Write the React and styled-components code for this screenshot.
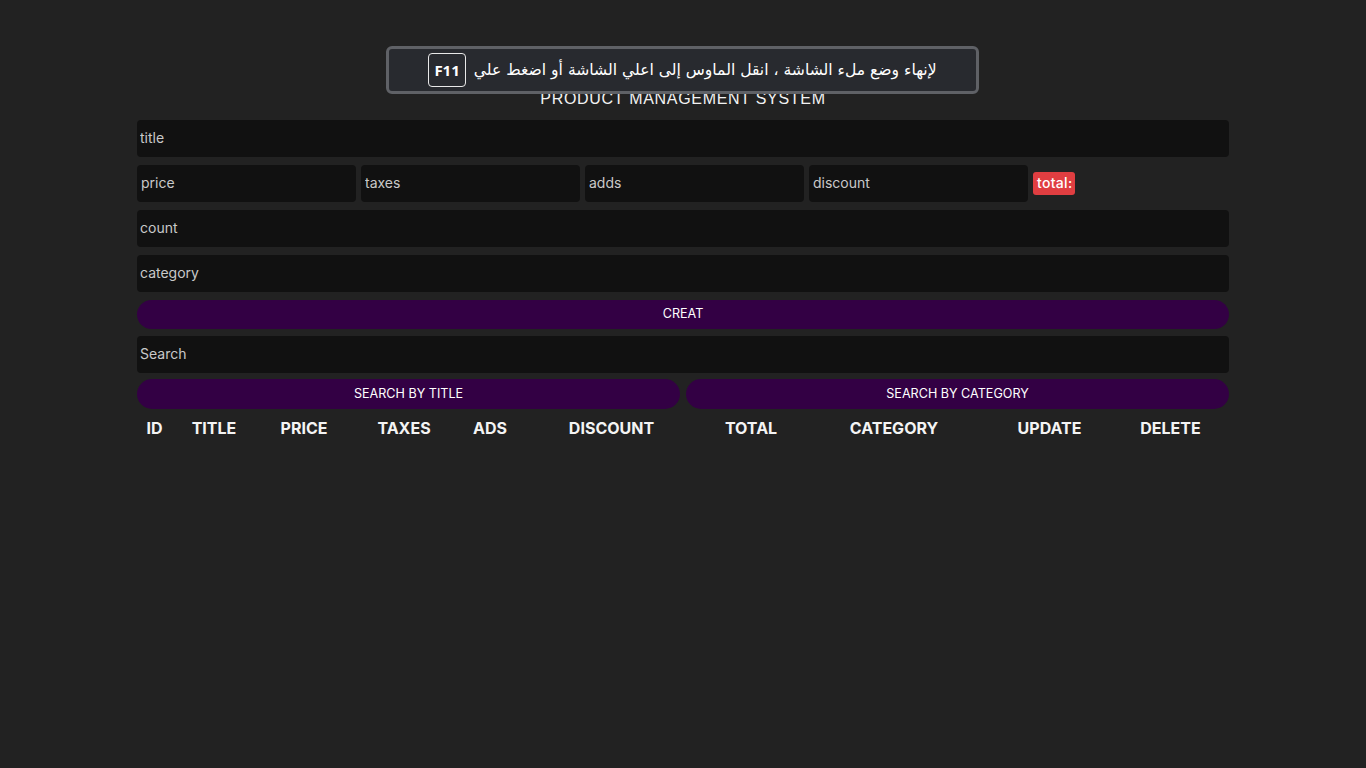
import React from "react";
import styled, { createGlobalStyle } from "styled-components";

const Global = createGlobalStyle`
  html, body { margin: 0; padding: 0; background: #222222; }
  body { font-family: Inter, "Noto Sans", sans-serif; color: #fff; }
  * { box-sizing: border-box; }
`;

const Page = styled.div`
  min-height: 768px;
  background: #222222;
  position: relative;
`;

const Container = styled.div`
  width: 1092px;
  margin: 0 auto;
  padding-top: 90px;
  display: flex;
  flex-direction: column;
`;

const Heading = styled.h2`
  margin: 0 0 12px;
  text-align: center;
  font-family: "Liberation Sans", Arial, sans-serif;
  font-size: 16px;
  font-weight: 400;
  letter-spacing: 0.7px;
  line-height: 18px;
  color: #f2f2f2;
`;

const Field = styled.input`
  width: 100%;
  height: 37px;
  border: none;
  outline: none;
  border-radius: 4px;
  background: #111111;
  padding: 0 3px 2px;
  margin-bottom: ${(p) => p.$mb ?? 8}px;
  font-family: Inter, sans-serif;
  font-size: 14px;
  color: #ddd;
  &::placeholder { color: #c9c9c9; }
`;

const PriceRow = styled.div`
  display: flex;
  align-items: center;
  gap: 5px;
  margin-bottom: 8px;
`;

const SmallField = styled(Field)`
  width: 219px;
  margin-bottom: 0;
  padding: 0 4px 2px;
`;

const Total = styled.small`
  background: #e03e41;
  color: #fff;
  border-radius: 3px;
  padding: 0 3px 0 4px;
  height: 23px;
  line-height: 22px;
  font-family: Inter, sans-serif;
  font-size: 14px;
  font-weight: 500;
  letter-spacing: 0.3px;
`;

const Button = styled.button`
  width: 100%;
  height: ${(p) => p.$h || 29}px;
  border: none;
  border-radius: 20px;
  background: #330044;
  color: #fff;
  font-family: Inter, sans-serif;
  font-size: 12.6px;
  cursor: pointer;
  padding: 0 0 2px;
  margin-bottom: ${(p) => p.$mb ?? 0}px;
`;

const SearchRow = styled.div`
  display: flex;
  gap: 6px;
  margin-top: -1px;
`;

const Header = styled.div`
  display: grid;
  grid-template-columns: 35px 84px 96px 104px 68px 175px 104px 182px 129px 113px;
  margin-top: 8px;
`;

const Th = styled.div`
  text-align: center;
  font-family: Inter, sans-serif;
  font-weight: 700;
  font-size: 16px;
  line-height: 22px;
  color: #f4f4f4;
`;

const Overlay = styled.div`
  position: absolute;
  top: 46px;
  left: 386px;
  width: 593px;
  height: 48px;
  background: #282a2f;
  border: 3px solid #5f6166;
  border-radius: 6px;
  display: flex;
  align-items: center;
  justify-content: center;
  gap: 8px;
  direction: rtl;
`;

const OverlayText = styled.span`
  font-family: "DejaVu Sans", "Noto Sans", sans-serif;
  font-size: 15.6px;
  color: #fff;
`;

const Key = styled.span`
  direction: ltr;
  border: 1px solid #e8e8e8;
  border-radius: 4px;
  padding: 0 5px;
  height: 34px;
  line-height: 32px;
  font-family: "Open Sans", sans-serif;
  font-weight: 700;
  font-size: 15px;
  color: #fff;
`;

const columns = ["ID", "TITLE", "PRICE", "TAXES", "ADS", "DISCOUNT", "TOTAL", "CATEGORY", "UPDATE", "DELETE"];

export default function App() {
  return (
    <Page>
      <Global />
      <Container>
        <Heading>PRODUCT MANAGEMENT SYSTEM</Heading>
        <Field placeholder="title" />
        <PriceRow>
          <SmallField placeholder="price" />
          <SmallField placeholder="taxes" />
          <SmallField placeholder="adds" />
          <SmallField placeholder="discount" />
          <Total>total:</Total>
        </PriceRow>
        <Field placeholder="count" />
        <Field placeholder="category" />
        <Button $mb={7}>CREAT</Button>
        <Field placeholder="Search" $mb={7} />
        <SearchRow>
          <Button $h={30}>SEARCH BY TITLE</Button>
          <Button $h={30}>SEARCH BY CATEGORY</Button>
        </SearchRow>
        <Header>
          {columns.map((c) => (
            <Th key={c}>{c}</Th>
          ))}
        </Header>
      </Container>
      <Overlay>
        <OverlayText>لإنهاء وضع ملء الشاشة ، انقل الماوس إلى اعلي الشاشة أو اضغط علي</OverlayText>
        <Key>F11</Key>
      </Overlay>
    </Page>
  );
}
